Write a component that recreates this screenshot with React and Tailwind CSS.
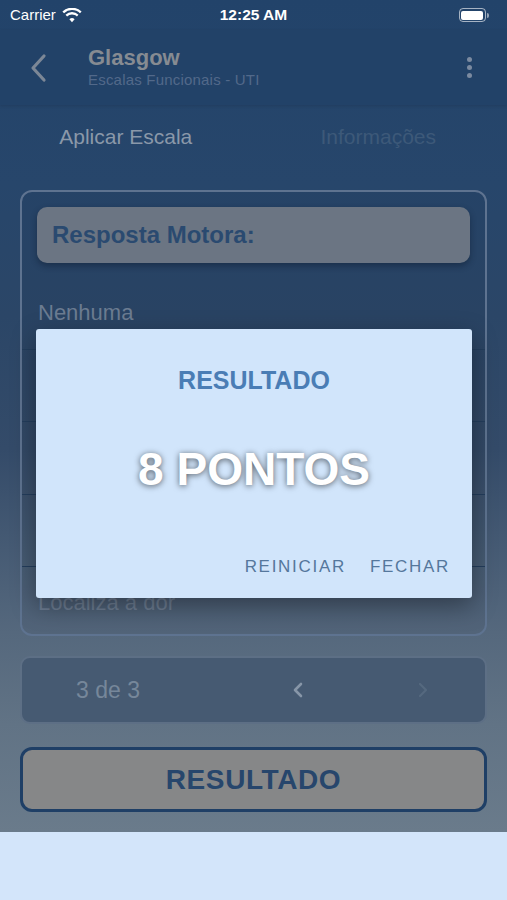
import React from "react";

function Wifi() {
  return (
    <svg width="20" height="15" viewBox="0 0 20 15" fill="white">
      <path d="M10 14.2l2.6-3a3.7 3.7 0 0 0-5.2 0z" />
      <path d="M10 6.6c1.9 0 3.6.7 4.9 1.9l1.6-1.8A9.5 9.5 0 0 0 10 4.1a9.5 9.5 0 0 0-6.5 2.6l1.6 1.8A7 7 0 0 1 10 6.6z" />
      <path d="M10 2.1c3.1 0 5.9 1.2 8 3.1L19.6 3.4A14 14 0 0 0 10 -.3 14 14 0 0 0 .4 3.4L2 5.2a11.7 11.7 0 0 1 8-3.1z" />
    </svg>
  );
}

function Battery() {
  return (
    <div className="flex items-center">
      <div className="w-[27px] h-[14px] rounded-[4px] border-[1.5px] border-white/60 p-[1.5px]">
        <div className="w-full h-full rounded-[2px] bg-white" />
      </div>
      <div className="w-[2px] h-[5px] rounded-r-sm bg-white/50 ml-[1px]" />
    </div>
  );
}

const options = [
  "Nenhuma",
  "Extensão anormal",
  "Flexão anormal",
  "Retirada à dor",
  "Localiza a dor",
  "Obedece comandos",
];

export default function App() {
  return (
    <div className="relative w-[507px] h-[900px] overflow-hidden font-['Liberation_Sans',Arial,sans-serif]">
      <div className="h-[832px] flex flex-col bg-[linear-gradient(180deg,#22436a_0%,#27466b_22%,#2b4667_38%,#344b69_54%,#55687d_76%,#617385_87%,#6a7b8b_100%)]">
        {/* Status bar */}
        <div className="h-[30px] flex items-center justify-between px-[10px] text-white">
          <div className="flex items-center gap-[6px] w-[120px]">
            <span className="text-[15px]">Carrier</span>
            <Wifi />
          </div>
          <span className="text-[15.5px] font-bold">12:25 AM</span>
          <div className="w-[120px] flex justify-end pr-[8px]">
            <Battery />
          </div>
        </div>
        {/* Nav bar */}
        <div className="h-[75px] flex items-center bg-[#224268] shadow-[0_1px_3px_rgba(0,0,0,0.12)]">
          <div className="w-[88px] pl-[28px]">
            <svg width="22" height="30" viewBox="0 0 22 30" fill="none" stroke="#7c8796" strokeWidth="3.2" strokeLinecap="round" strokeLinejoin="round">
              <path d="M16 3L5 15l11 12" />
            </svg>
          </div>
          <div className="flex-1 flex flex-col pb-[2px]">
            <span className="text-[22px] font-bold leading-[26px] text-[#868b92]">Glasgow</span>
            <span className="text-[15px] leading-[18px] text-[#52698a] tracking-[0.2px]">Escalas Funcionais - UTI</span>
          </div>
          <div className="w-[40px] flex flex-col items-center gap-[3px] mr-[18px]">
            <div className="w-[5px] h-[5px] rounded-full bg-[#7b8aa0]" />
            <div className="w-[5px] h-[5px] rounded-full bg-[#7b8aa0]" />
            <div className="w-[5px] h-[5px] rounded-full bg-[#7b8aa0]" />
          </div>
        </div>
        {/* Tabs */}
        <div className="h-[64px] grid grid-cols-2 items-center text-[21px]">
          <span className="text-center text-[#8a98a9] pr-[2px]">Aplicar Escala</span>
          <span className="text-center text-[#3d5979] pr-[4px]">Informações</span>
        </div>
        {/* Card */}
        <div className="mx-[20px] mt-[21px] h-[446px] shrink-0 border-2 border-[#5e7390] rounded-[12px] bg-black/[0.03] overflow-hidden flex flex-col">
          <div className="mx-[15px] mt-[15px] h-[56px] shrink-0 rounded-[10px] bg-[#6b7583] shadow-[0_3px_6px_rgba(10,25,45,0.45)] flex items-center pl-[15px]">
            <span className="text-[24px] font-bold text-[#2a4a70]">Resposta Motora:</span>
          </div>
          <div className="mt-[14px] flex flex-col">
            {options.map((o) => (
              <div key={o} className="h-[72.5px] shrink-0 flex items-center pl-[16px] border-b border-[#233d5c]">
                <span className="text-[22px] text-[#6c7c91]">{o}</span>
              </div>
            ))}
          </div>
        </div>
        {/* Pager */}
        <div className="mx-[20px] mt-[20px] h-[68px] shrink-0 border-2 border-[#5d6f85] rounded-[10px] bg-[#465a72] flex items-center">
          <div className="w-[270px] pl-[54px] text-[23px] leading-[28px] text-[#76879a]">3 de 3</div>
          <div className="w-[125px] flex">
            <svg width="12" height="18" viewBox="0 0 12 18" fill="none" stroke="#8796a8" strokeWidth="2.6" strokeLinecap="round" strokeLinejoin="round">
              <path d="M9 3L3 9l6 6" />
            </svg>
          </div>
          <svg width="12" height="18" viewBox="0 0 12 18" fill="none" stroke="#55697f" strokeWidth="2.2" strokeLinecap="round" strokeLinejoin="round">
            <path d="M3 3l6 6-6 6" />
          </svg>
        </div>
        {/* Result button */}
        <div className="mx-[20px] mt-[23px] h-[65px] shrink-0 border-[3px] border-[#1f3f66] rounded-[12px] bg-[#868788] flex items-center justify-center">
          <span className="text-[28px] font-bold tracking-[0.6px] text-[#27466c]">RESULTADO</span>
        </div>
      </div>
      <div className="h-[68px] bg-[#d3e5fa]" />

      {/* Modal */}
      <div className="absolute left-[36px] top-[329px] w-[436px] h-[269px] bg-[#d1e5fb] rounded-[3px] shadow-[0_8px_24px_rgba(0,0,0,0.35)] flex flex-col items-center">
        <span className="mt-[37px] text-[25px] font-bold text-[#4a7db5] leading-[28px]">RESULTADO</span>
        <span className="mt-[49px] text-[46px] font-bold text-white leading-[52px] [text-shadow:0_1px_6px_rgba(0,0,0,0.6)]">8 PONTOS</span>
        <div className="self-end mt-[59px] mr-[22px] flex gap-[24px] text-[17px] tracking-[1.7px] text-[#55779c] font-medium">
          <span>REINICIAR</span>
          <span>FECHAR</span>
        </div>
      </div>
    </div>
  );
}
